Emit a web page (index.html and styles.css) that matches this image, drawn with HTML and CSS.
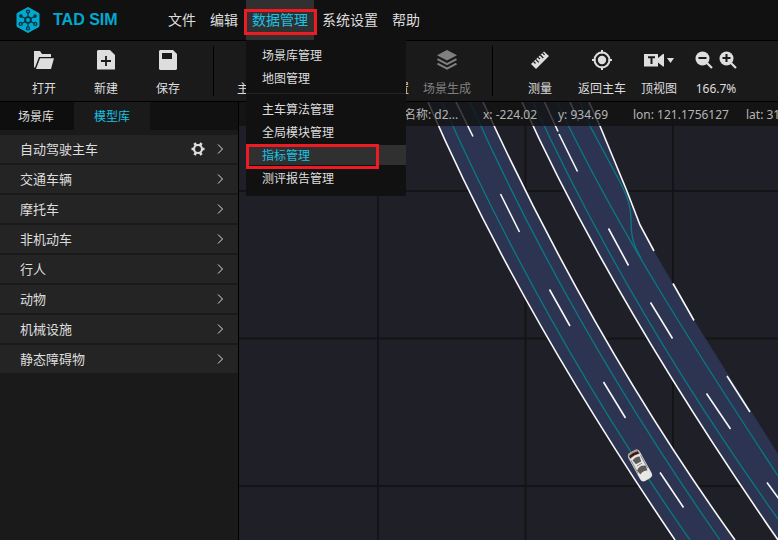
FILE: index.html
```html
<!DOCTYPE html>
<html lang="zh-CN">
<head>
<meta charset="utf-8">
<meta name="viewport" content="width=device-width, initial-scale=1">
<title>TAD SIM</title>
<link rel="stylesheet" href="styles.css">
</head>
<body>
<svg class="defs" aria-hidden="true">
  <symbol id="chevron" viewBox="0 0 10 12"><path d="M3 1.500 7.500 6 3 10.500" fill="none" stroke="currentColor" stroke-width="1"/></symbol>
  <symbol id="layers" viewBox="0 0 20 20"><path d="M10 0 20 5.200 10 10.400 0 5.200z" fill="currentColor"/><path d="M.5 9.200 10 14.200 19.500 9.200M.5 13.600 10 18.600 19.500 13.600" fill="none" stroke="currentColor" stroke-width="2"/></symbol>
</svg>
<header class="topbar">
  <div class="brand">
    <svg class="logo" viewBox="0 0 24 26" aria-hidden="true">
      <path d="M12 .5 23 6.500v13L12 25.500 1 19.500v-13z" fill="#00a9cf" stroke="#00a9cf" stroke-linejoin="round"/>
      <g fill="none" stroke="#07323d" stroke-width="1.300">
        <path d="M12 6v4M12 16v4M5.500 9.500l4 2M18.500 9.500l-4 2M5.500 16.500l4-2M18.500 16.500l-4-2"/>
        <circle cx="12" cy="13" r="2.900" stroke-width="1.800"/>
        <circle cx="12" cy="4.600" r="1.500"/><circle cx="12" cy="21.400" r="1.500"/>
        <circle cx="4.700" cy="16.900" r="1.500"/><circle cx="19.300" cy="16.900" r="1.500"/>
      </g>
      <g fill="#07323d"><circle cx="4.900" cy="9.100" r="1.800"/><circle cx="19.100" cy="9.100" r="1.800"/></g>
    </svg>
    <span class="brand-name">TAD SIM</span>
  </div>
  <nav class="menubar">
    <button class="menu-title">文件</button>
    <button class="menu-title">编辑</button>
    <div class="menu">
      <button class="menu-title open" aria-expanded="true">数据管理</button>
      <div class="dropdown">
        <button class="entry">场景库管理</button>
        <button class="entry">地图管理</button>
        <hr class="separator">
        <button class="entry">主车算法管理</button>
        <button class="entry">全局模块管理</button>
        <button class="entry current">指标管理</button>
        <button class="entry">测评报告管理</button>
      </div>
    </div>
    <button class="menu-title">系统设置</button>
    <button class="menu-title">帮助</button>
  </nav>
</header>
<div class="toolbar">
  <button class="tool"><svg viewBox="0 0 20 20"><path d="M0 1h6l2 3h9v3H5L1 17.500H0z" fill="currentColor"/><path d="M6 8.200h14L17 19H2z" fill="currentColor"/></svg><span>打开</span></button>
  <button class="tool"><svg viewBox="0 0 20 20"><path d="M2 0h12l5 5v14.500H1V1z" fill="currentColor"/><path d="M10 6v10M5 11h10" stroke="#1a1a1a" stroke-width="1.800"/></svg><span>新建</span></button>
  <button class="tool"><svg viewBox="0 0 20 20"><path d="M2 0h13l4 4v15l-1 1H2l-1-1V1z" fill="currentColor"/><path d="M4 3h10v6H4z" fill="#1a1a1a"/></svg><span>保存</span></button>
  <i class="divider"></i>
  <button class="tool"><svg><use href="#layers"/></svg><span>主车配置</span></button>
  <button class="tool"><svg><use href="#layers"/></svg></button>
  <button class="tool"><svg><use href="#layers"/></svg><span>环境配置</span></button>
  <button class="tool" disabled><svg><use href="#layers"/></svg><span>场景生成</span></button>
  <i class="divider"></i>
  <button class="tool"><svg viewBox="0 0 20 20"><path d="M1 14 14 1.500 19 6 6 19z" fill="currentColor"/><path d="m3.500 11.500 2 2M5.800 9.300l3 3M8 7.200l2 2M10.300 5l3 3M12.600 2.900l2 2" stroke="#1a1a1a" stroke-width="1.200"/></svg><span>测量</span></button>
  <button class="tool"><svg viewBox="0 0 20 20"><circle cx="10" cy="10" r="7.500" fill="none" stroke="currentColor" stroke-width="2"/><circle cx="10" cy="10" r="4.200" fill="currentColor"/><path d="M10 0v3.500M10 16.500V20M0 10h3.500M16.500 10H20" stroke="currentColor" stroke-width="2"/></svg><span>返回主车</span></button>
  <button class="tool view"><svg class="wide" viewBox="0 0 30 20"><path d="M0 4h14v4l5-4h1v12.500h-1l-5-4v4H0z" fill="currentColor"/><path d="M4 7.200h7M7.500 7v7" stroke="#1a1a1a" stroke-width="2"/><path d="M23 8h7l-3.500 5z" fill="currentColor"/></svg><span>顶视图</span></button>
  <div class="tool">
    <div class="zoom">
      <button aria-label="缩小"><svg viewBox="0 0 18 20"><circle cx="7.500" cy="8.500" r="7" fill="currentColor"/><path d="m12 13 5 5" stroke="currentColor" stroke-width="2.200"/><path d="M3.500 8h8" stroke="#1a1a1a" stroke-width="2"/></svg></button>
      <button aria-label="放大"><svg viewBox="0 0 18 20"><circle cx="7.500" cy="8.500" r="7" fill="currentColor"/><path d="m12 13 5 5" stroke="currentColor" stroke-width="2.200"/><path d="M3.500 8h8M7.500 4v8" stroke="#1a1a1a" stroke-width="2"/></svg></button>
    </div>
    <span>166.7%</span>
  </div>
</div>
<main class="workspace">
  <aside class="sidebar">
    <div class="tabs" role="tablist">
      <button class="tab" role="tab" aria-selected="false">场景库</button>
      <button class="tab selected" role="tab" aria-selected="true">模型库</button>
    </div>
    <ul class="models">
      <li><button class="model">自动驾驶主车</button><button class="gear" aria-label="设置"><svg viewBox="0 0 14 14"><circle cx="7" cy="7" r="4" fill="none" stroke="currentColor" stroke-width="2.200"/><path d="M3.500 1 5 3.500M10.500 1 9 3.500M.5 7H3M11 7h2.500M3.500 13 5 10.500M10.500 13 9 10.500" stroke="currentColor" stroke-width="2.600"/></svg></button><svg class="chevron"><use href="#chevron"/></svg></li>
      <li><button class="model">交通车辆</button><svg class="chevron"><use href="#chevron"/></svg></li>
      <li><button class="model">摩托车</button><svg class="chevron"><use href="#chevron"/></svg></li>
      <li><button class="model">非机动车</button><svg class="chevron"><use href="#chevron"/></svg></li>
      <li><button class="model">行人</button><svg class="chevron"><use href="#chevron"/></svg></li>
      <li><button class="model">动物</button><svg class="chevron"><use href="#chevron"/></svg></li>
      <li><button class="model">机械设施</button><svg class="chevron"><use href="#chevron"/></svg></li>
      <li><button class="model">静态障碍物</button><svg class="chevron"><use href="#chevron"/></svg></li>
    </ul>
  </aside>
  <section class="map">
    <svg class="scene" viewBox="239 102 539 438" preserveAspectRatio="xMinYMin slice" aria-hidden="true">
      <path class="grid" d="M378 102v438M525.500 102v438M673 102v438M239 191h539M239 338.500h539M239 486h539"/>
      <g class="road">
        <path d="M428 102C491 248 576 394 675 540H735C630 394 550 248 483 102z"/>
        <path d="M522 102C588 248 677 394 778 540V454L694 320 654 251 640 225 626.500 190 600 126 589 102z"/>
      </g>
      <g class="lane">
        <path d="M442 102C507 248 588 394 690 540M470 102C535 248 618 394 720 540"/>
        <path d="M533 102C597 241 679 380 778 519M557 102C616 227 696 351 778 476"/>
        <path d="M580 102 590 126 620 182C628 198 631 207 631 220 631 238 634 246 641 258"/>
      </g>
      <g class="marking">
        <path d="M428 102C491 248 576 394 675 540M483 102C550 248 630 394 735 540"/>
        <path d="M522 102C588 248 677 394 778 540M589 102 600 126 626.500 190 640 225 654 251M673 283.500 694 320.500M727 376 750 412"/>
        <path d="M456 102 473 136.500M500.500 194 519.500 232M549.500 289.500 570 326M603.500 382 625.500 418M660 472.500 683.500 507.500"/>
        <path d="M544.500 102 558 131.500M559 134 577.500 171.500M570 102 578.500 121M608.500 228.500 628.500 265.500M650.500 302.500 672.500 338.500M706.500 393.500 730.500 429M767 482.500 779 499"/>
      </g>
      <g transform="translate(640 465.500) rotate(-29)">
        <rect x="-6.500" y="-16" width="13" height="32" rx="4" fill="#e9e7e4"/>
        <path d="M-6-13Q-6-16-3-16H3Q6-16 6-13V-10Q0-12-6-10z" fill="#a99a98"/>
        <path d="M-5-13.500Q0-15 5-13.500V-11Q0-12.500-5-11z" fill="#3b1718"/>
        <path d="M-4-8Q0-10 4-8L3-3H-3z" fill="#5b5b59"/>
        <path d="M-5 3Q0-1 5 3L4 8Q0 6-4 8z" fill="#5b5b59"/>
        <path d="M-5.500-9V6M5.500-9V6M-3-1H3" stroke="#8d8d89" fill="none"/>
      </g>
    </svg>
    <div class="infobar">
      <span class="name">场景名称: d2...</span>
      <span class="coord">x: -224.02</span>
      <span class="coord">y: 934.69</span>
      <span class="geo">lon: 121.1756127</span>
      <span class="geo">lat: 31.2848331</span>
    </div>
  </section>
</main>
</body>
</html>
```
FILE: styles.css
```css
* { box-sizing: border-box; }

body {
  margin: 0;
  height: 100vh;
  display: flex;
  flex-direction: column;
  overflow: hidden;
  background: #1a1a1a;
  color: #dedede;
  font: 12px/20px "Noto Sans", "Noto Sans CJK SC", sans-serif;
}

button {
  margin: 0;
  padding: 0;
  border: 0;
  background: none;
  color: inherit;
  font: inherit;
  white-space: nowrap;
}

svg { display: block; }

.defs {
  position: absolute;
  width: 0;
  height: 0;
}

.topbar {
  display: flex;
  background: #111;
  border-bottom: 1px solid #000;
}

.brand {
  display: flex;
  align-items: center;
  gap: 13px;
  width: 162px;
  padding-left: 16px;
}

.logo {
  width: 24px;
  height: 26px;
}

.brand-name {
  color: #00a9cf;
  font: bold 16px/20px "Liberation Sans", sans-serif;
}

.menubar {
  display: flex;
  gap: 2px;
}

.menu { position: relative; }

.menu-title {
  height: 40px;
  padding: 0 6px;
  font-size: 14px;
}

.menu-title.open {
  background: #303030;
  color: #17c3e6;
}

.menu-title.open::after,
.entry.current::after {
  content: "";
  position: absolute;
  border: 3px solid #ed1c24;
}

.menu-title.open::after {
  inset: 9px -3px 5px -2px;
}

.dropdown {
  position: absolute;
  z-index: 2;
  top: 40px;
  left: 0;
  width: 160px;
  display: flex;
  flex-direction: column;
  gap: 3px;
  padding: 5px 0 8px;
  background: #111;
}

.entry {
  position: relative;
  height: 20px;
  padding: 0 16px;
  line-height: 22px;
  text-align: left;
}

.entry.current {
  background: #303030;
  color: #17c3e6;
}

.entry:not(.current) { padding-top: 0; }

.entry {
  display: flex;
  align-items: flex-start;
}

.entry.current::after {
  inset: -1px 27px -4px 0;
}

.separator {
  width: 100%;
  height: 1px;
  margin: 2px 0;
  border: 0;
  background: #242424;
}

.toolbar {
  display: flex;
  align-items: center;
  height: 61px;
  padding-left: 13px;
  border-bottom: 1px solid #000;
}

.tool {
  align-self: flex-start;
  display: flex;
  flex: none;
  flex-direction: column;
  align-items: center;
  gap: 9px;
  width: 62px;
  padding-top: 9px;
}

.tool svg {
  width: 20px;
  height: 20px;
}

.tool:disabled { color: #808080; }

.tool.view { width: 52px; }

.tool svg.wide { width: 30px; }

.zoom {
  display: flex;
  gap: 6px;
}

.zoom svg { width: 18px; }

.divider {
  width: 1px;
  height: 50px;
  margin: 0 16px 0 14px;
  background: #000;
}

.workspace {
  display: flex;
  flex: 1;
  min-height: 0;
}

.sidebar {
  flex: none;
  width: 239px;
  border-right: 1px solid #000;
}

.tabs {
  display: flex;
  background: #111;
}

.tab {
  width: 76px;
  height: 28px;
  padding-top: 2px;
}

.tab:first-child {
  width: 74px;
  padding-right: 2px;
  background: #0e0e0e;
}

.tab.selected {
  background: #1a1a1a;
  color: #17c3e6;
}

.models {
  display: flex;
  flex-direction: column;
  gap: 2px;
  margin: 5px 0 0;
  padding: 0;
  list-style: none;
}

.models li {
  display: flex;
  align-items: center;
  gap: 10px;
  height: 28px;
  padding: 0 13px 0 20px;
  background: #242424;
}

.model {
  flex: 1;
  font-size: 13px;
  text-align: left;
}

.gear svg {
  width: 14px;
  height: 14px;
}

.chevron {
  width: 10px;
  height: 12px;
}

.map {
  position: relative;
  flex: 1;
  min-width: 0;
  overflow: hidden;
  background: #1f1f27;
}

.scene {
  width: 100%;
  height: 100%;
}

.grid {
  fill: none;
  stroke: #141417;
  stroke-width: 2;
}

.road { fill: #2c3452; }

.lane {
  fill: none;
  stroke: #087a82;
  stroke-width: 1.3;
}

.marking {
  fill: none;
  stroke: #f8f8f8;
  stroke-width: 1.6;
}

.infobar {
  position: absolute;
  inset: 0 0 auto;
  display: flex;
  height: 24px;
  padding-left: 141px;
  background: rgba(17, 17, 17, 0.8);
  color: #b4b4b4;
  line-height: 26px;
  white-space: nowrap;
  overflow: hidden;
}

.infobar span { flex: none; }

.name { width: 103px; }

.coord { width: 75px; }

.geo { width: 113px; }
```
